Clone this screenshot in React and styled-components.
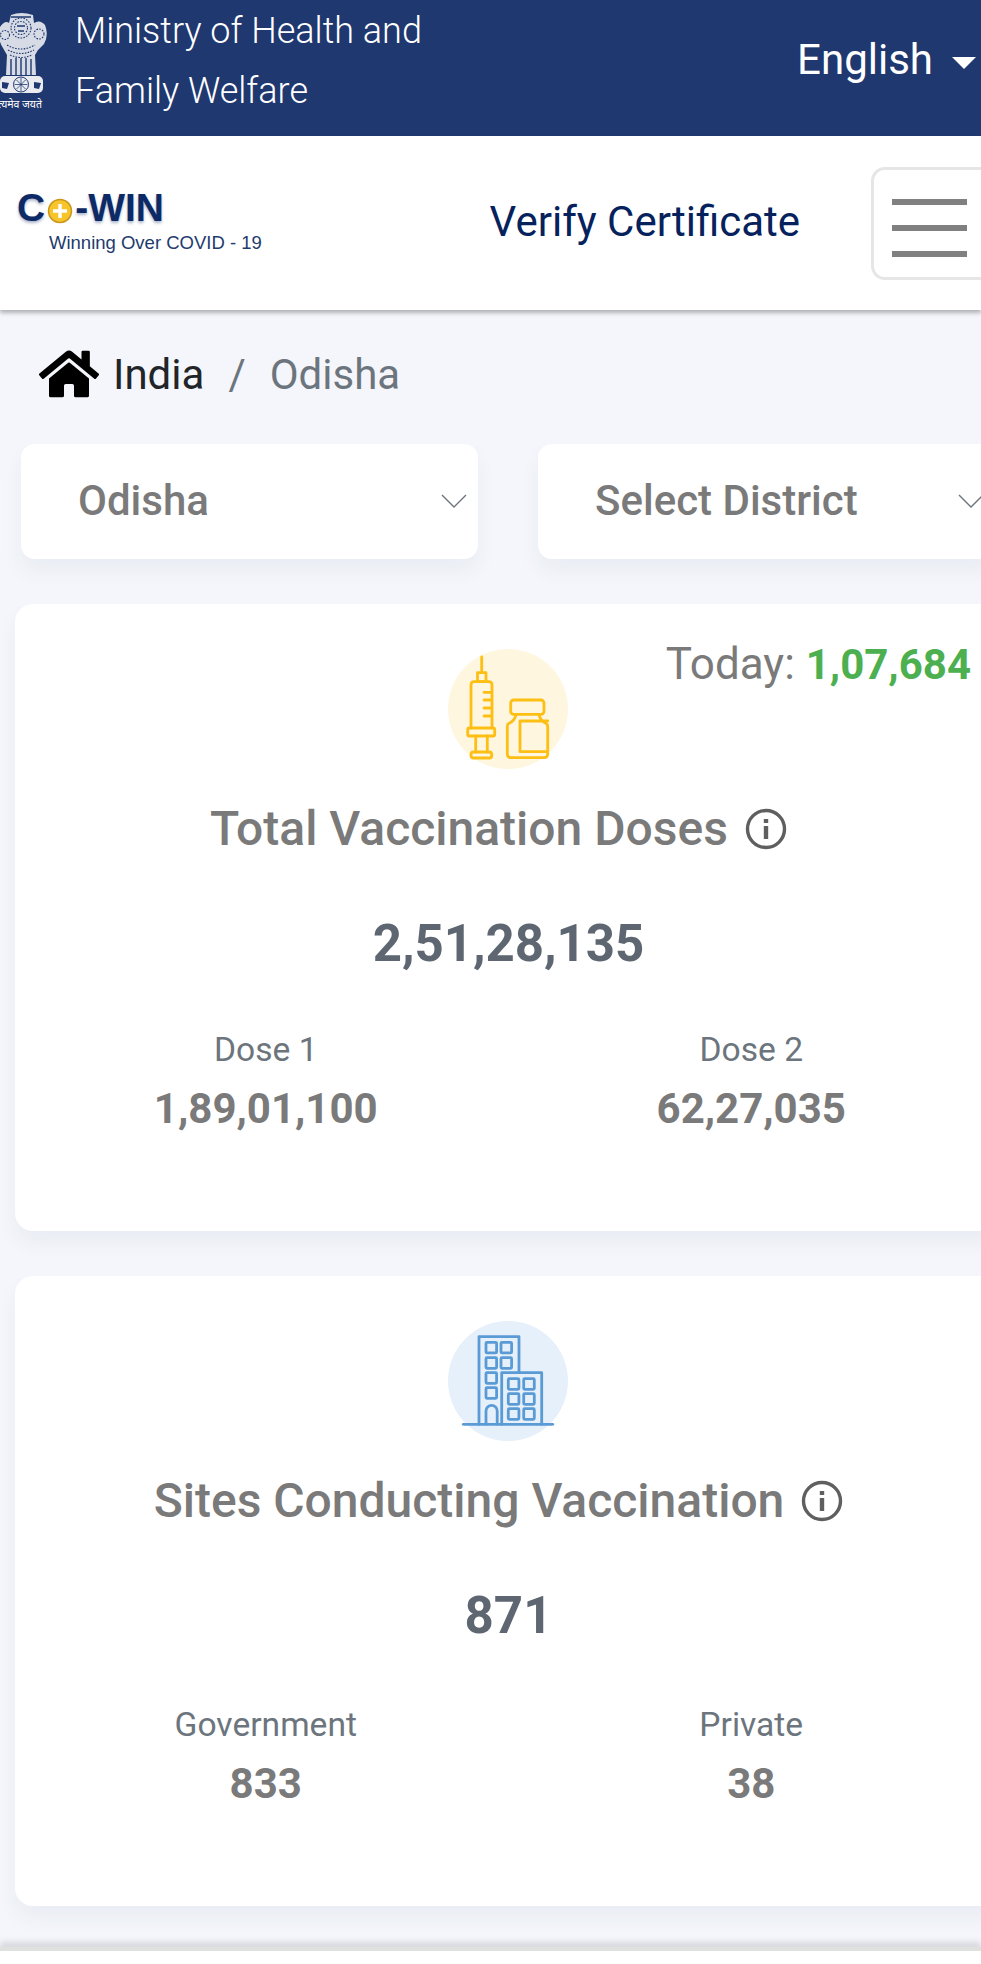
import React from 'react';
import styled, { createGlobalStyle } from 'styled-components';
import { FaHome } from 'react-icons/fa';

const GlobalStyle = createGlobalStyle`
  html, body {
    margin: 0;
    padding: 0;
    background: #f4f6fb;
  }
  * {
    box-sizing: border-box;
  }
`;

const Page = styled.div`
  width: 981px;
  height: 1964px;
  overflow: hidden;
  background: #f4f6fb;
  font-family: Roboto, "Liberation Sans", sans-serif;
`;

const TopBar = styled.div`
  height: 136px;
  background: #1f3870;
  display: flex;
  align-items: center;
  color: #fff;
`;

const Ministry = styled.div`
  margin-left: 24px;
  font-size: 36px;
  font-weight: 300;
  line-height: 60px;
  margin-top: -15px;
`;

const Language = styled.div`
  margin-left: auto;
  margin-right: 5px;
  margin-top: -18px;
  display: flex;
  align-items: center;
  gap: 19px;
  font-size: 42px;
  font-weight: 400;
`;

const Caret = styled.span`
  width: 0;
  height: 0;
  margin-top: 8px;
  border-top: 12px solid #fff;
  border-left: 12px solid transparent;
  border-right: 12px solid transparent;
`;

const NavBar = styled.div`
  height: 174px;
  background: #fff;
  display: flex;
  align-items: center;
  box-shadow: 0 3px 4px rgba(0, 0, 0, 0.28);
  position: relative;
`;

const Brand = styled.div`
  margin-left: 17px;
  margin-top: -4px;
  font-family: "Liberation Sans", Arial, sans-serif;
`;

const BrandName = styled.div`
  display: flex;
  align-items: center;
  height: 38px;
  color: #0d2a66;
  font-size: 39px;
  font-weight: 700;
  text-shadow: 0 2px 3px rgba(13, 42, 102, 0.35);
`;

const BrandCoin = styled.svg`
  width: 26px;
  height: 26px;
  margin: 6px 2px 0 2px;
`;

const BrandTag = styled.div`
  margin: 5px 0 0 32px;
  font-size: 18.5px;
  color: #1e3a6e;
  white-space: nowrap;
`;

const VerifyLink = styled.a`
  margin-left: auto;
  margin-top: -4px;
  margin-right: -1px;
  color: #06225c;
  font-size: 42px;
  font-weight: 400;
  white-space: nowrap;
`;

const Toggler = styled.div`
  flex: none;
  width: 130px;
  height: 113px;
  margin: 0 -20px 0 72px;
  border: 3px solid #e6e6e6;
  border-radius: 14px;
  padding: 29px 0 0 18px;
  display: flex;
  flex-direction: column;
  gap: 20px;
`;

const TogglerBar = styled.span`
  display: block;
  width: 75px;
  height: 6px;
  background: #808080;
`;

const Breadcrumb = styled.div`
  height: 134px;
  padding: 0 0 0 39px;
  display: flex;
  align-items: center;
  font-size: 42px;
  color: #212529;
`;

const HomeIcon = styled(FaHome)`
  width: 60px;
  height: 54px;
  color: #000;
  margin: -6px 14px 0 0;
`;

const Crumb = styled.span`
  margin-top: -5px;
  color: ${(p) => p.$muted ? '#6c757d' : '#212529'};
`;

const Slash = styled.span`
  color: #6c757d;
  margin: -5px 24px 0 24px;
`;

const SelectRow = styled.div`
  display: flex;
  gap: 60px;
  padding-left: 21px;
  width: 1100px;
`;

const SelectBox = styled.div`
  flex: none;
  width: 457px;
  height: 115px;
  background: #fff;
  border-radius: 14px;
  padding: 0 11px 2px 57px;
  display: flex;
  align-items: center;
  justify-content: space-between;
  color: #7a7a7a;
  font-size: 42px;
  font-weight: 500;
  box-shadow: 0 12px 20px rgba(40, 60, 80, 0.05);
`;

const Chevron = styled.svg`
  width: 26px;
  height: 14px;
  fill: none;
  stroke: #6c757d;
  stroke-width: 1.4;
`;

const Card = styled.section`
  position: relative;
  width: 987px;
  height: ${(p) => p.$height}px;
  margin: ${(p) => p.$top}px 0 0 15px;
  padding: 45px 8px 0;
  background: #fff;
  border-radius: 18px;
  box-shadow: 0 12px 20px rgba(40, 60, 80, 0.05);
  text-align: center;
`;

const Today = styled.div`
  position: absolute;
  top: 34px;
  right: 31px;
  font-size: 44px;
  color: #7a7a7a;
  white-space: nowrap;
`;

const TodayValue = styled.b`
  color: #4caf50;
  font-size: 42px;
  font-weight: 700;
`;

const IconDisc = styled.svg`
  display: block;
  width: 120px;
  height: 120px;
  margin-left: 425px;
  fill: none;
  stroke-linejoin: round;
  stroke-linecap: round;
`;

const CardTitle = styled.h2`
  margin: 30px 0 0;
  height: 60px;
  padding-right: 20px;
  display: flex;
  align-items: center;
  justify-content: center;
  gap: 17px;
  font-size: 48px;
  font-weight: 500;
  line-height: 60px;
  color: #7a7a7a;
`;

const InfoGlyph = styled.svg`
  width: 42px;
  height: 42px;
  flex: none;
  fill: none;
  stroke: #5f5f5f;
`;

const CardTotal = styled.div`
  margin-top: 55px;
  height: 60px;
  font-size: 51px;
  font-weight: 700;
  line-height: 60px;
  color: #5e6771;
`;

const SplitRow = styled.div`
  display: grid;
  grid-template-columns: 1fr 1fr;
  margin-top: ${(p) => p.$gap}px;
`;

const SplitLabel = styled.div`
  font-size: 33.6px;
  line-height: 46px;
  color: #6c757d;
`;

const SplitValue = styled.div`
  margin-top: 11px;
  font-size: 42px;
  line-height: 50px;
  font-weight: 700;
  color: #7a7a7a;
`;

const Footer = styled.div`
  height: 17px;
  margin-top: 41px;
  background: #fff;
  border-top: 4px solid #dfe1df;
  box-shadow: 0 -5px 6px rgba(0, 0, 0, 0.12);
  position: relative;
`;

const Emblem = styled.svg`
  flex: none;
  width: 52px;
  height: 100px;
  margin-left: -1px;
  margin-top: -14px;
  fill: none;
  stroke: #1f3870;
`;

const Motto = styled.text`
  font-family: "Noto Sans", "DejaVu Sans", sans-serif;
  font-size: 10.5px;
  fill: #fff;
  stroke: none;
`;

const EmblemIcon = () => (
  <Emblem viewBox="0 0 52 100">
    <path
      d="M12 4 Q22 0 34 4 L35 12 Q41 8 46 14 Q50 24 45 33 L39 39 L36 44 L37 64 H7 L8 44 L4 37 Q-2 28 1 16 Q6 9 10 12 Z"
      fill="#fff"
      stroke="none"
      opacity="0.82"
    />
    <g strokeWidth="1.1" strokeDasharray="1.6 1.3">
      <circle cx="22" cy="17" r="10" />
      <circle cx="22" cy="17" r="6.5" />
      <circle cx="6" cy="24" r="4.5" />
      <circle cx="40" cy="23" r="5" />
      <path d="M8 34 q14 8 28 0 M9 39 q13 7 26 0 M11 44 q11 5 22 0" />
    </g>
    <path d="M18 15 h8 M19 20 h6 M12 6 h20" strokeWidth="1.3" />
    <path d="M12 48 V64 M17 47 V64 M22 47 V64 M27 47 V64 M32 48 V64" strokeWidth="1.4" />
    <rect x="1" y="65" width="43" height="17" rx="5" fill="#fff" stroke="none" opacity="0.9" />
    <circle cx="22" cy="73.5" r="7.5" />
    <path d="M22 67 v13 M15.5 73.5 h13 M17.5 69 l9 9 M26.5 69 l-9 9" strokeWidth="0.8" />
    <path d="M3 71 l7 1 l-2 6 l-5 -1 Z M35 71 l7 1 l-2 6 l-5 -1 Z" fill="#1f3870" stroke="none" />
    <Motto x="-8" y="97">सत्यमेव जयते</Motto>
  </Emblem>
);

const SyringeVial = () => (
  <IconDisc viewBox="0 0 120 120">
    <circle cx="60" cy="60" r="60" fill="#fff6e0" />
    <g stroke="#fdbf13" strokeWidth="2.8">
      <path d="M33.7 8 V23.7" />
      <rect x="29.5" y="23.7" width="8.5" height="9" />
      <path d="M23 79 V36 q0 -3.3 3 -3.3 H41 q3 0 3 3.3 V79" />
      <path d="M36 43.3 h7 M36 51 h7 M36 59 h7 M36 67 h7" />
      <rect x="19.7" y="79" width="27" height="8" rx="1.5" />
      <path d="M27.7 87 V103 M39.3 87 V103" />
      <rect x="23" y="103" width="20.7" height="6" rx="2.5" />
      <rect x="62.7" y="51" width="33.3" height="14.3" rx="3" />
      <path d="M68 65.3 Q67 72 60 75 Q59.3 76 59.3 78 V105 q0 3.7 3.7 3.7 H96 q3.7 0 3.7 -3.7 V78 Q99.7 76 99 75 Q92 72 91 65.3" />
      <path d="M99.7 72 H72 V102.7 H99.7" />
    </g>
  </IconDisc>
);

const Buildings = () => (
  <IconDisc viewBox="0 0 120 120">
    <circle cx="60" cy="60" r="60" fill="#e6f0fa" />
    <g stroke="#5b9bd5" strokeWidth="2.8">
      <path d="M31 103.3 V15.7 H71 V51.7" />
      <path d="M53.7 103.3 V51.7 H93.7 V103.3" />
      <path d="M15.3 103.3 H104.7" />
      {[[38, 21.3], [53, 21.3], [38, 36.7], [53, 36.7], [38, 51.7], [38, 66.7]].map(([x, y]) => (
        <rect key={`${x}-${y}`} x={x} y={y} width="10.6" height="10.6" rx="1" />
      ))}
      {[57.7, 72.7, 87.7].flatMap((y) => [60.3, 75.7].map((x) => (
        <rect key={`${x}-${y}`} x={x} y={y} width="10.6" height="10.6" rx="1" />
      )))}
      <path d="M38 103.3 V90 a5.6 5.6 0 0 1 11.2 0 V103.3" />
    </g>
  </IconDisc>
);

const InfoIcon = () => (
  <InfoGlyph viewBox="0 0 42 42">
    <circle cx="21" cy="21" r="18.5" strokeWidth="3.4" />
    <path d="M21 18 V31" strokeWidth="4.4" />
    <path d="M21 11 V15" strokeWidth="4.4" />
  </InfoGlyph>
);

const SelectField = ({ label }) => (
  <SelectBox>
    {label}
    <Chevron viewBox="0 0 26 14">
      <path d="M1 1 L13 13 L25 1" />
    </Chevron>
  </SelectBox>
);

const StatCard = ({ height, top, gap, icon, title, total, split, children }) => (
  <Card $height={height} $top={top}>
    {children}
    {icon}
    <CardTitle>
      {title}
      <InfoIcon />
    </CardTitle>
    <CardTotal>{total}</CardTotal>
    <SplitRow $gap={gap}>
      {split.map((s) => (
        <div key={s.label}>
          <SplitLabel>{s.label}</SplitLabel>
          <SplitValue>{s.value}</SplitValue>
        </div>
      ))}
    </SplitRow>
  </Card>
);

export default function App() {
  return (
    <Page>
      <GlobalStyle />
      <TopBar>
        <EmblemIcon />
        <Ministry>
          Ministry of Health and
          <br />
          Family Welfare
        </Ministry>
        <Language>
          English
          <Caret />
        </Language>
      </TopBar>

      <NavBar>
        <Brand>
          <BrandName>
            C
            <BrandCoin viewBox="0 0 26 26">
              <circle cx="13" cy="13" r="11.5" fill="#f7c52b" stroke="#c9961a" strokeWidth="1.5" />
              <path d="M13 6 V20 M6 13 H20" stroke="#fff" strokeWidth="3.4" />
            </BrandCoin>
            -WIN
          </BrandName>
          <BrandTag>Winning Over COVID - 19</BrandTag>
        </Brand>
        <VerifyLink>Verify Certificate</VerifyLink>
        <Toggler>
          <TogglerBar />
          <TogglerBar />
          <TogglerBar />
        </Toggler>
      </NavBar>

      <Breadcrumb>
        <HomeIcon />
        <Crumb>India</Crumb>
        <Slash>/</Slash>
        <Crumb $muted>Odisha</Crumb>
      </Breadcrumb>

      <SelectRow>
        <SelectField label="Odisha" />
        <SelectField label="Select District" />
      </SelectRow>

      <StatCard
        height={627}
        top={45}
        gap={53}
        icon={<SyringeVial />}
        title="Total Vaccination Doses"
        total="2,51,28,135"
        split={[
          { label: 'Dose 1', value: '1,89,01,100' },
          { label: 'Dose 2', value: '62,27,035' },
        ]}
      >
        <Today>
          Today: <TodayValue>1,07,684</TodayValue>
        </Today>
      </StatCard>

      <StatCard
        height={630}
        top={45}
        gap={56}
        icon={<Buildings />}
        title="Sites Conducting Vaccination"
        total="871"
        split={[
          { label: 'Government', value: '833' },
          { label: 'Private', value: '38' },
        ]}
      />

      <Footer />
    </Page>
  );
}
